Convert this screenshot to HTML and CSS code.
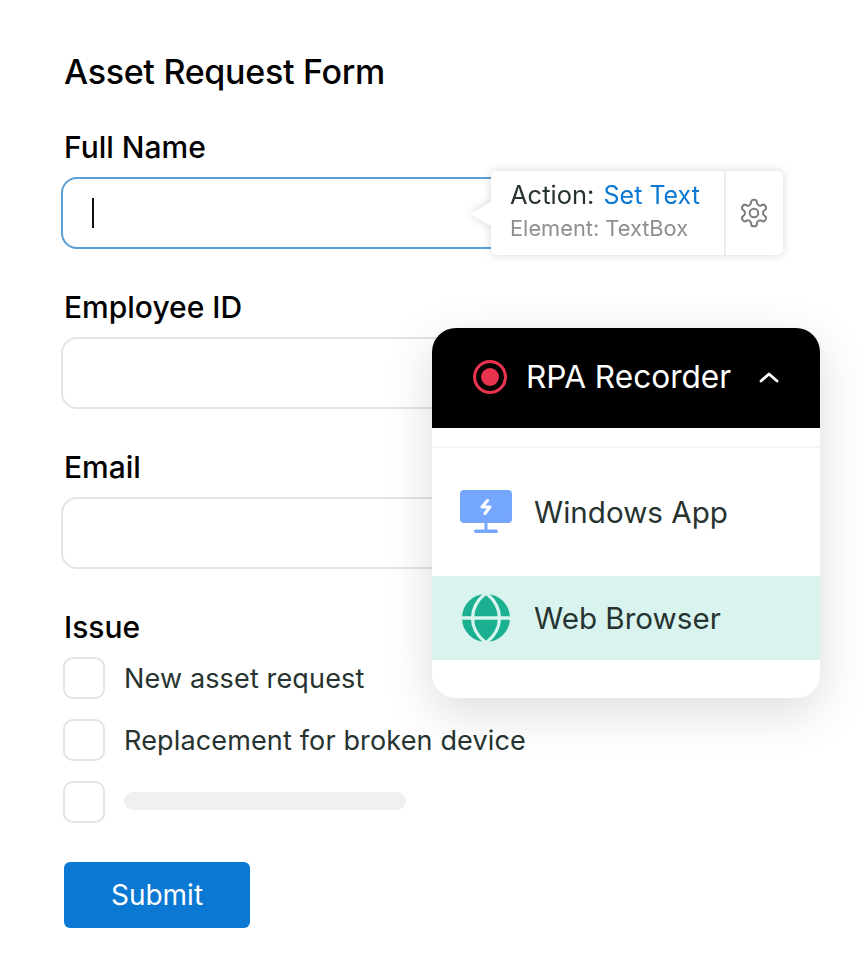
FILE: index.html
```html
<!DOCTYPE html>
<html lang="en">

<head>
    <meta charset="UTF-8">
    <meta name="viewport" content="width=device-width, initial-scale=1.0">
    <title>Asset Request Form</title>
    <link rel="stylesheet" href="styles.css">
</head>

<body>
    <div class="container">
        <h1 class="form_title">Asset Request Form</h1>

        <div class="field">
            <div class="field_label">Full Name</div>
            <div class="text_box active"><span class="caret"></span></div>
        </div>
        <div class="field">
            <div class="field_label">Employee ID</div>
            <div class="text_box"></div>
        </div>
        <div class="field">
            <div class="field_label">Email</div>
            <div class="text_box"></div>
        </div>

        <div class="field_label">Issue</div>
        <div class="check_list">
            <div class="check_row"><span class="check"></span><span>New asset request</span></div>
            <div class="check_row"><span class="check"></span><span>Replacement for broken device</span></div>
            <div class="check_row"><span class="check"></span><span class="skeleton"></span></div>
        </div>

        <button type="button" class="submit_btn">Submit</button>

        <div class="action_tip">
            <div class="action_text">
                <div class="action_line">Action: <span class="action_value">Set Text</span></div>
                <div class="action_sub">Element: TextBox</div>
            </div>
            <div class="action_gear">
                <svg width="32" height="32" viewBox="0 0 24 24" fill="none" stroke="#7d7d7d" stroke-width="1.5" stroke-linecap="round" stroke-linejoin="round">
                    <path d="M12.2 2h-.4a2 2 0 0 0-2 2v.2a2 2 0 0 1-1 1.7l-.4.3a2 2 0 0 1-2 0l-.2-.1a2 2 0 0 0-2.7.7l-.2.4a2 2 0 0 0 .7 2.7l.2.1a2 2 0 0 1 1 1.7v.6a2 2 0 0 1-1 1.7l-.2.1a2 2 0 0 0-.7 2.7l.2.4a2 2 0 0 0 2.7.7l.2-.1a2 2 0 0 1 2 0l.4.3a2 2 0 0 1 1 1.7v.2a2 2 0 0 0 2 2h.4a2 2 0 0 0 2-2v-.2a2 2 0 0 1 1-1.7l.4-.3a2 2 0 0 1 2 0l.2.1a2 2 0 0 0 2.7-.7l.2-.4a2 2 0 0 0-.7-2.7l-.2-.1a2 2 0 0 1-1-1.7v-.6a2 2 0 0 1 1-1.7l.2-.1a2 2 0 0 0 .7-2.7l-.2-.4a2 2 0 0 0-2.7-.7l-.2.1a2 2 0 0 1-2 0l-.4-.3a2 2 0 0 1-1-1.7V4a2 2 0 0 0-2-2z" />
                    <circle cx="12" cy="12" r="3.2" />
                </svg>
            </div>
        </div>

        <div class="recorder">
            <div class="recorder_head">
                <span class="record_dot"></span>
                <span class="recorder_title">RPA Recorder</span>
                <svg width="20" height="12" viewBox="0 0 20 12" fill="none" stroke="#fff" stroke-width="2.8" stroke-linecap="round" stroke-linejoin="round">
                    <path d="M2 10l8-7 8 7" />
                </svg>
            </div>
            <div class="recorder_gap"></div>
            <div class="recorder_item windows">
                <svg width="52" height="44" viewBox="0 0 52 44" class="item_icon">
                    <rect x="0" y="0" width="52" height="33" rx="4" fill="#76a7ff" />
                    <rect x="24.5" y="33" width="3" height="7" fill="#76a7ff" />
                    <rect x="14" y="39.5" width="24" height="3.5" rx="1.7" fill="#76a7ff" />
                    <path d="M27.5 10.500l-5.500 6.500h8l-5 6.500" fill="none" stroke="#fff" stroke-width="3" stroke-linecap="round" stroke-linejoin="round" />
                </svg>
                <span>Windows App</span>
            </div>
            <div class="recorder_item browser">
                <svg width="52" height="50" viewBox="0 0 52 50" class="item_icon">
                    <circle cx="26" cy="25" r="24" fill="#1bb08f" />
                    <path d="M26 0C16 8 12.500 16 12.500 25S16 42 26 50C36 42 39.500 34 39.500 25S36 8 26 0Z" fill="none" stroke="#d9f4ee" stroke-width="3.200" />
                    <path d="M0 25h52" stroke="#d9f4ee" stroke-width="3.500" />
                </svg>
                <span>Web Browser</span>
            </div>
        </div>
    </div>
</body>

</html>
```

FILE: styles.css
```css
* {
    margin: 0;
    padding: 0;
    box-sizing: border-box;
}

body {
    background-color: #fff;
    font-family: Inter, "Liberation Sans", sans-serif;
    color: #000;
}

.container {
    position: relative;
    width: 868px;
    height: 970px;
    padding: 50px 0 0 61px;
    overflow: hidden;
}

.form_title {
    font-size: 34px;
    line-height: 44px;
    font-weight: 500;
    letter-spacing: -0.3px;
    margin: 0 0 33px 3px;
}

.field {
    margin-bottom: 38px;
}

.field_label {
    font-size: 30px;
    line-height: 40px;
    font-weight: 500;
    margin: 0 0 10px 3px;
}

.text_box {
    width: 540px;
    height: 72px;
    border: 2px solid #e4e4e4;
    border-radius: 16px;
    display: flex;
    align-items: center;
    padding-left: 29px;
}

.text_box.active {
    border-color: #5a9fd8;
}

.caret {
    width: 2px;
    height: 30px;
    background-color: #111;
}

.check_list {
    display: flex;
    flex-direction: column;
    gap: 20px;
    margin-top: 1px;
}

.check_row {
    display: flex;
    align-items: center;
    gap: 19px;
    margin-left: 2px;
    height: 42px;
    font-size: 27px;
    letter-spacing: 0.15px;
    color: #263330;
}

.check {
    width: 42px;
    height: 42px;
    border: 2px solid #e4e4e4;
    border-radius: 10px;
    flex-shrink: 0;
}

.skeleton {
    width: 282px;
    height: 18px;
    border-radius: 9px;
    background-color: #f0f0f0;
    margin-bottom: 2px;
}

.submit_btn {
    display: block;
    width: 186px;
    height: 66px;
    margin: 39px 0 0 3px;
    border: none;
    border-radius: 6px;
    background-color: #0b78d3;
    color: #fff;
    font-family: inherit;
    font-size: 28px;
}

.action_tip {
    position: absolute;
    left: 491px;
    top: 171px;
    width: 292px;
    height: 84px;
    display: flex;
    background-color: #fff;
    border-radius: 6px;
    filter: drop-shadow(0 0 5px rgba(0, 0, 0, 0.16));
}

.action_tip::before {
    content: "";
    position: absolute;
    left: -21px;
    top: 31px;
    border-style: solid;
    border-width: 12px 21px 12px 0;
    border-color: transparent #fff transparent transparent;
}

.action_text {
    flex: 1;
    padding: 7px 0 0 19px;
    border-right: 2px solid #ececec;
}

.action_line {
    font-size: 25.5px;
    line-height: 34px;
    color: #263330;
}

.action_value {
    color: #0b78d3;
    font-size: 25px;
    margin-left: 2px;
}

.action_sub {
    font-size: 21.8px;
    line-height: 32px;
    color: #8e8e8e;
}

.action_gear {
    width: 57px;
    display: flex;
    align-items: center;
    justify-content: center;
    padding-right: 2px;
}

.recorder {
    position: absolute;
    left: 432px;
    top: 328px;
    width: 388px;
    height: 370px;
    background-color: #fff;
    border-radius: 24px;
    overflow: hidden;
    box-shadow: 0 14px 50px rgba(0, 0, 0, 0.14);
}

.recorder_head {
    height: 100px;
    background-color: #000;
    color: #fff;
    display: flex;
    align-items: center;
    padding: 0 0 3px 41px;
}

.record_dot {
    width: 34px;
    height: 34px;
    border: 3px solid #e8334e;
    border-radius: 50%;
    background-color: #e8334e;
    box-shadow: inset 0 0 0 5px #000;
}

.recorder_title {
    font-size: 31.6px;
    margin: 0 28px 0 19px;
}

.recorder_gap {
    height: 20px;
    border-bottom: 2px solid #f6f6f6;
}

.recorder_item {
    display: flex;
    align-items: center;
    gap: 22px;
    padding-left: 28px;
    font-size: 29.6px;
    color: #263330;
}

.recorder_item.windows {
    height: 128px;
}

.recorder_item.browser {
    height: 84px;
    background-color: #d9f4ee;
}
```
